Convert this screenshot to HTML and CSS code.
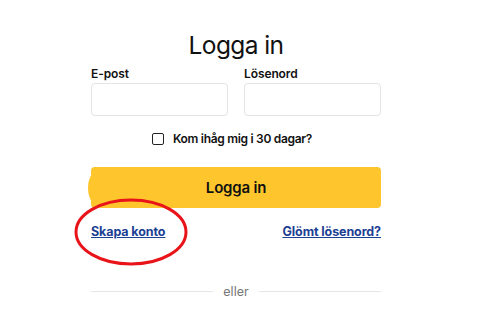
FILE: index.html
```html
<!DOCTYPE html>
<html>
<head>
    <title>Logga in</title>
    <link rel="stylesheet" href="styles.css">
</head>
<body>
    <div class="login">
        <h1 class="title">Logga in</h1>
        <form class="fields">
            <div class="field">
                <label for="email">E-post</label>
                <input type="text" id="email">
            </div>
            <div class="field">
                <label for="password">Lösenord</label>
                <input type="password" id="password">
            </div>
        </form>
        <label class="remember">
            <span class="box"></span>
            Kom ihåg mig i 30 dagar?
        </label>
        <button class="submit" type="submit">Logga in</button>
        <div class="links">
            <a href="#">Skapa konto</a>
            <a href="#">Glömt lösenord?</a>
        </div>
        <div class="divider"><span>eller</span></div>

        <!-- red marker drawn over the page -->
        <svg class="marker" width="116" height="70" viewBox="0 0 116 70">
            <ellipse cx="58" cy="35" rx="55" ry="32" fill="none" stroke="#e8141a" stroke-width="3"/>
        </svg>
    </div>
</body>
</html>
```

FILE: styles.css
```css
body {
    margin: 0;
    background-color: #FFFFFF;
    color: #111111;
    font-family: Inter, "Liberation Sans", Arial, sans-serif;
}
.login {
    position: relative;
    width: 290px;
    margin-left: 91px;
    padding-top: 30px;
}
.title {
    margin: 0;
    font-size: 24.5px;
    font-weight: 400;
    line-height: 30px;
    text-align: center;
    letter-spacing: -0.6px;
}
.fields {
    display: flex;
    gap: 16px;
    margin-top: 6px;
}
.field {
    display: flex;
    flex-direction: column;
    flex: 1;
    min-width: 0;
}
.field label {
    font-size: 12px;
    font-weight: 600;
    line-height: 16px;
    margin-bottom: 1px;
    letter-spacing: -0.1px;
}
.field input {
    width: 100%;
    height: 33px;
    box-sizing: border-box;
    border: 1px solid #e4e4e4;
    border-radius: 4px;
    margin: 0;
}
.remember {
    display: flex;
    align-items: center;
    justify-content: center;
    gap: 9px;
    margin-top: 15px;
    margin-left: -8px;
    font-size: 12px;
    font-weight: 600;
    line-height: 16px;
    letter-spacing: -0.3px;
}
.box {
    width: 10px;
    height: 10px;
    border: 1.5px solid #222222;
    border-radius: 2px;
}
/* Yellow main button */
.submit {
    position: relative;
    display: block;
    width: 290px;
    height: 41px;
    margin-top: 20px;
    border: none;
    border-radius: 4px;
    background-color: #FEC62C;
    color: #111111;
    font-family: inherit;
    font-size: 15px;
    font-weight: 600;
    letter-spacing: -0.2px;
}
.submit::before {
    content: "";
    position: absolute;
    left: -3px;
    top: 7px;
    width: 12px;
    height: 28px;
    border-radius: 50%;
    background-color: #FEC62C;
}
.links {
    display: flex;
    justify-content: space-between;
    margin-top: 16px;
    font-size: 12.5px;
    font-weight: 700;
    line-height: 16px;
    letter-spacing: -0.1px;
}
.links a {
    color: #1c3f94;
}
.divider {
    display: flex;
    align-items: center;
    gap: 10px;
    margin-top: 44px;
    color: #777777;
    font-size: 12.5px;
}
.divider::before, .divider::after {
    content: "";
    flex: 1;
    height: 1px;
    background-color: #e6e6e6;
}
.marker {
    position: absolute;
    left: -18px;
    top: 197px;
}
```
